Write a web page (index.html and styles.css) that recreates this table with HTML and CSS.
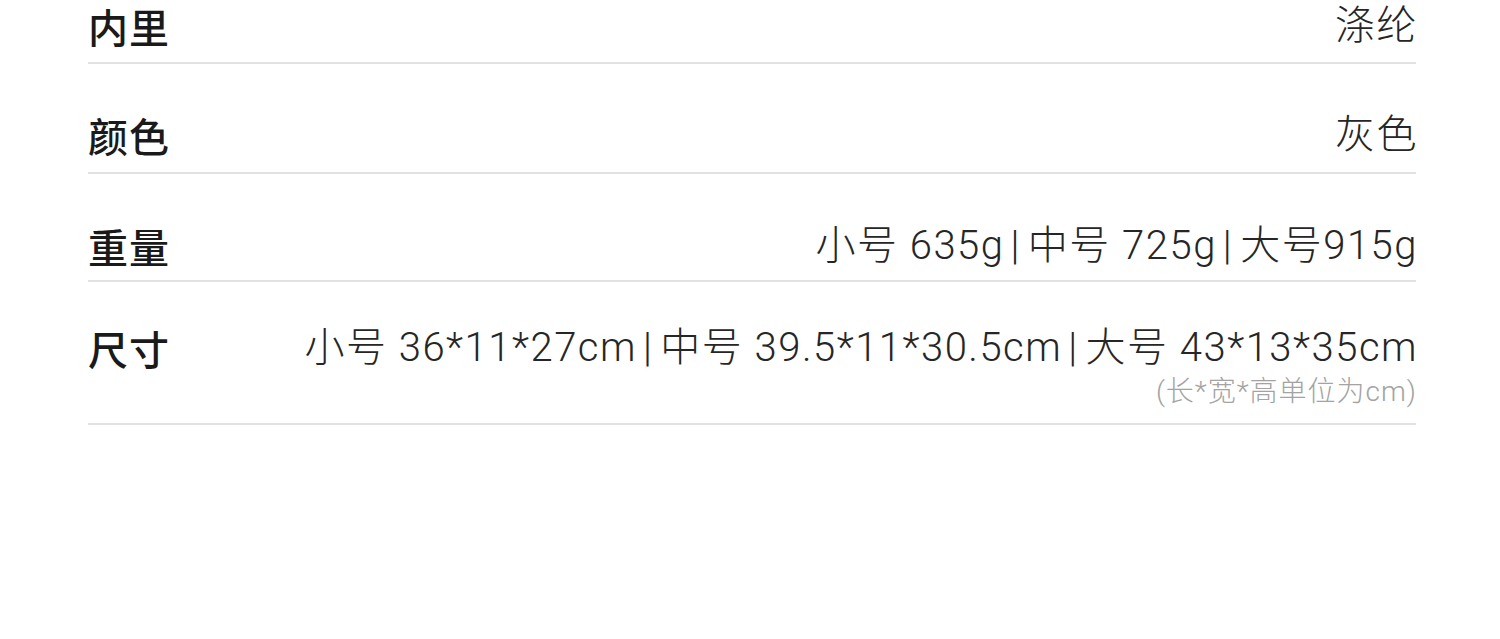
FILE: index.html
```html
<!DOCTYPE html>
<html lang="zh-CN">
<head>
<meta charset="utf-8">
<link rel="stylesheet" href="styles.css">
</head>
<body>
<div class="spec">
  <div class="row row-first">
    <div class="label">内里</div>
    <div class="value">涤纶</div>
  </div>
  <div class="row row-2">
    <div class="label">颜色</div>
    <div class="value">灰色</div>
  </div>
  <div class="row row-3">
    <div class="label">重量</div>
    <div class="value">小号 635g<span class="sep">|</span>中号 725g<span class="sep">|</span>大号915g</div>
  </div>
  <div class="row row-4">
    <div class="label">尺寸</div>
    <div class="value-col">
      <div class="value">小号 36*11*27cm<span class="sep">|</span>中号 39.5*11*30.5cm<span class="sep">|</span>大号 43*13*35cm</div>
      <div class="note">(长*宽*高单位为cm)</div>
    </div>
  </div>
</div>
</body>
</html>
```
FILE: styles.css
```css
html, body {
  margin: 0;
  padding: 0;
  background: #ffffff;
}
body {
  font-family: "Roboto", "Noto Sans CJK SC", sans-serif;
}
.spec {
  margin: 0 84px 0 88px;
}
.row {
  display: flex;
  justify-content: space-between;
  align-items: flex-start;
  border-bottom: 2px solid #e2e2e2;
}
.row-first { padding: 6px 0 16px; }
.row-2 { padding: 51px 0 17px; }
.row-3 { padding: 52px 0 14px; }
.row-4 { padding: 46px 0 17px; }
.label {
  font-family: "Noto Sans CJK SC", sans-serif;
  font-size: 40px;
  line-height: 40px;
  font-weight: 500;
  color: #1a1a1a;
  letter-spacing: 1px;
}
.value-col {
  display: flex;
  flex-direction: column;
  align-items: flex-end;
}
.value {
  font-size: 40px;
  line-height: 40px;
  font-weight: 300;
  color: #262626;
  letter-spacing: 1.5px;
  white-space: nowrap;
  margin-right: -2px;
}
.sep {
  margin: 0 7px 0 6px;
}
.note {
  margin-top: 10px;
  margin-right: -1px;
  font-size: 28px;
  line-height: 28px;
  color: #a3a3a3;
  font-weight: 300;
  letter-spacing: 1px;
}
```
